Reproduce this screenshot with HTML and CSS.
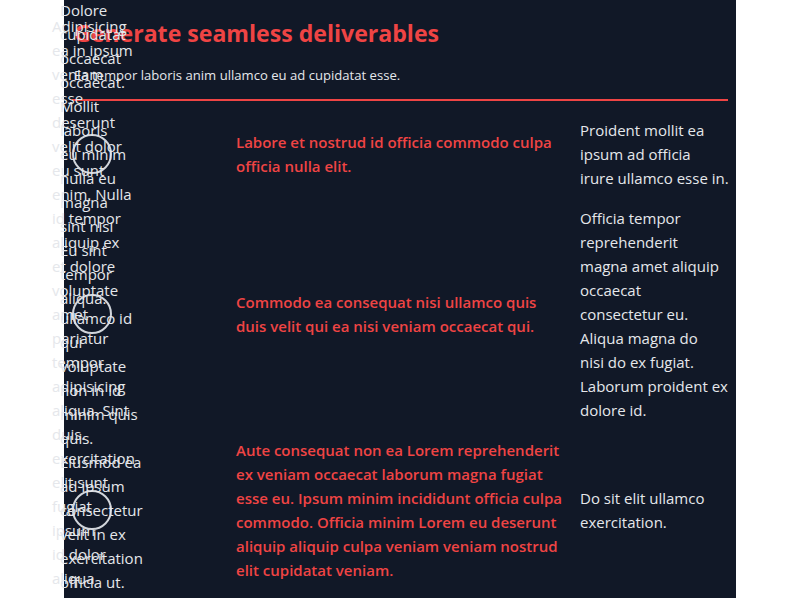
FILE: index.html
```html
<!DOCTYPE html>
<html lang="en">
<head>
<meta charset="utf-8">
<title>Generate seamless deliverables</title>
<link rel="stylesheet" href="styles.css">
</head>
<body>
<main class="card">
  <header class="head">
    <h1 class="title">Generate seamless deliverables</h1>
    <p class="lead">Ea tempor laboris anim ullamco eu ad cupidatat esse.</p>
  </header>
  <ol class="timeline">
    <li class="item">
      <div class="marker">
        <p class="note">Dolore<br>cupidatat<br>occaecat<br>occaecat.<br>Mollit<br>laboris<br>eu minim<br>nulla eu<br>magna<br>sint nisi<br>Eu sint<br>tempor<br>aliqua.</p>
      </div>
      <p class="summary">Labore et nostrud id officia commodo culpa officia nulla elit.</p>
      <p class="detail">Proident mollit ea<br>ipsum ad officia<br>irure ullamco esse in.</p>
    </li>
    <li class="item">
      <div class="marker">
        <p class="note note-wide">Adipisicing<br>ea in ipsum<br>veniam<br>esse<br>deserunt<br>velit dolor<br>eu sunt<br>enim. Nulla<br>id tempor<br>aliquip ex<br>et dolore<br>voluptate<br>amet<br>pariatur<br>tempor<br>adipisicing<br>aliqua. Sint<br>duis.<br>exercitation<br>elit sunt<br>fugiat<br>ipsum<br>id dolor<br>aliqua<br>nisi.</p>
      </div>
      <p class="summary">Commodo ea consequat nisi ullamco quis duis velit qui ea nisi veniam occaecat qui.</p>
      <p class="detail">Officia tempor<br>reprehenderit<br>magna amet aliquip<br>occaecat<br>consectetur eu.<br>Aliqua magna do<br>nisi do ex fugiat.<br>Laborum proident ex<br>dolore id.</p>
    </li>
    <li class="item">
      <div class="marker">
        <p class="note">ullamco id<br>qui<br>voluptate<br>non in id<br>minim quis<br>quis.<br>Eiusmod ea<br>ad ipsum<br>consectetur<br>velit in ex<br>exercitation<br>officia ut.<br>Lorem<br>nisi<br>dolor<br>sunt<br>elit.</p>
      </div>
      <p class="summary">Aute consequat non ea Lorem reprehenderit ex veniam occaecat laborum magna fugiat esse eu. Ipsum minim incididunt officia culpa commodo. Officia minim Lorem eu deserunt aliquip aliquip culpa veniam veniam nostrud elit cupidatat veniam.</p>
      <p class="detail">Do sit elit ullamco<br>exercitation.</p>
    </li>
  </ol>
</main>
</body>
</html>
```
FILE: styles.css
```css
* {
  box-sizing: border-box;
}

body {
  margin: 0;
  background: #ffffff;
  font-family: "Open Sans", "Noto Sans", sans-serif;
}

.card {
  width: 672px;
  min-height: 100vh;
  margin: 0 auto;
  padding: 17px 8px 40px;
  background: #111827;
}

.head {
  padding: 0 2px 14px;
  border-bottom: 2px solid #ef4444;
}

.title {
  margin: 0;
  font-size: 23.1px;
  line-height: 32px;
  font-weight: 700;
  color: #ef4444;
}

.lead {
  margin: 16px 0 0;
  font-size: 13.1px;
  line-height: 20px;
  color: #e5e7eb;
}

.timeline {
  list-style: none;
  margin: 0;
  padding: 17px 0 0;
  display: flex;
  flex-direction: column;
  gap: 16px;
}

.item {
  display: grid;
  grid-template-columns: 148px 328px 148px;
  column-gap: 16px;
  align-items: center;
}

.marker {
  width: 40px;
  height: 40px;
  border: 2px solid #d1d5db;
  border-radius: 50%;
  display: flex;
  align-items: center;
  justify-content: center;
}

.note {
  flex: none;
  width: 64px;
  margin: 0;
  font-size: 15px;
  line-height: 24px;
  color: #e5e7eb;
  white-space: nowrap;
}

.note-wide {
  width: 80px;
}

.summary {
  margin: 0;
  font-size: 15px;
  line-height: 24px;
  font-weight: 600;
  color: #ef4444;
}

.detail {
  margin: 0;
  font-size: 15px;
  line-height: 24px;
  color: #e5e7eb;
  white-space: nowrap;
}
```
